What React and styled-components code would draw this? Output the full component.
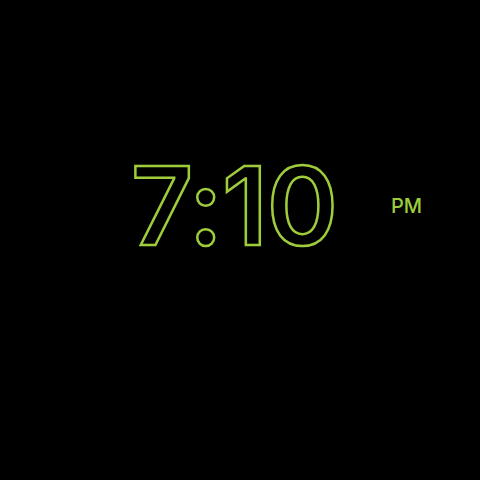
import React from "react";
import styled, { createGlobalStyle } from "styled-components";

const Global = createGlobalStyle`
  html, body { margin: 0; padding: 0; background: #000; }
  body { font-family: Inter, "Noto Sans", sans-serif; }
`;

const Screen = styled.div`
  width: 480px;
  height: 480px;
  background: #000;
  display: flex;
  align-items: center;
`;

const Row = styled.div`
  width: 100%;
  display: grid;
  grid-template-columns: 1fr auto 1fr;
  align-items: center;
  margin-top: -68px;
`;

const Time = styled.div`
  grid-column: 2;
  margin-right: 12px;
  font-family: Inter, sans-serif;
  font-size: 108px;
  font-weight: 600;
  line-height: 1;
  color: transparent;
  -webkit-text-stroke: 2.5px #9fcc3b;
  letter-spacing: -1px;
`;

const Meridiem = styled.div`
  grid-column: 3;
  justify-self: start;
  margin-left: 42px;
  font-family: Inter, sans-serif;
  font-size: 20px;
  font-weight: 500;
  color: #9fcc3b;
`;

export default function App() {
  return (
    <>
      <Global />
      <Screen>
        <Row>
          <Time>7:10</Time>
          <Meridiem>PM</Meridiem>
        </Row>
      </Screen>
    </>
  );
}
